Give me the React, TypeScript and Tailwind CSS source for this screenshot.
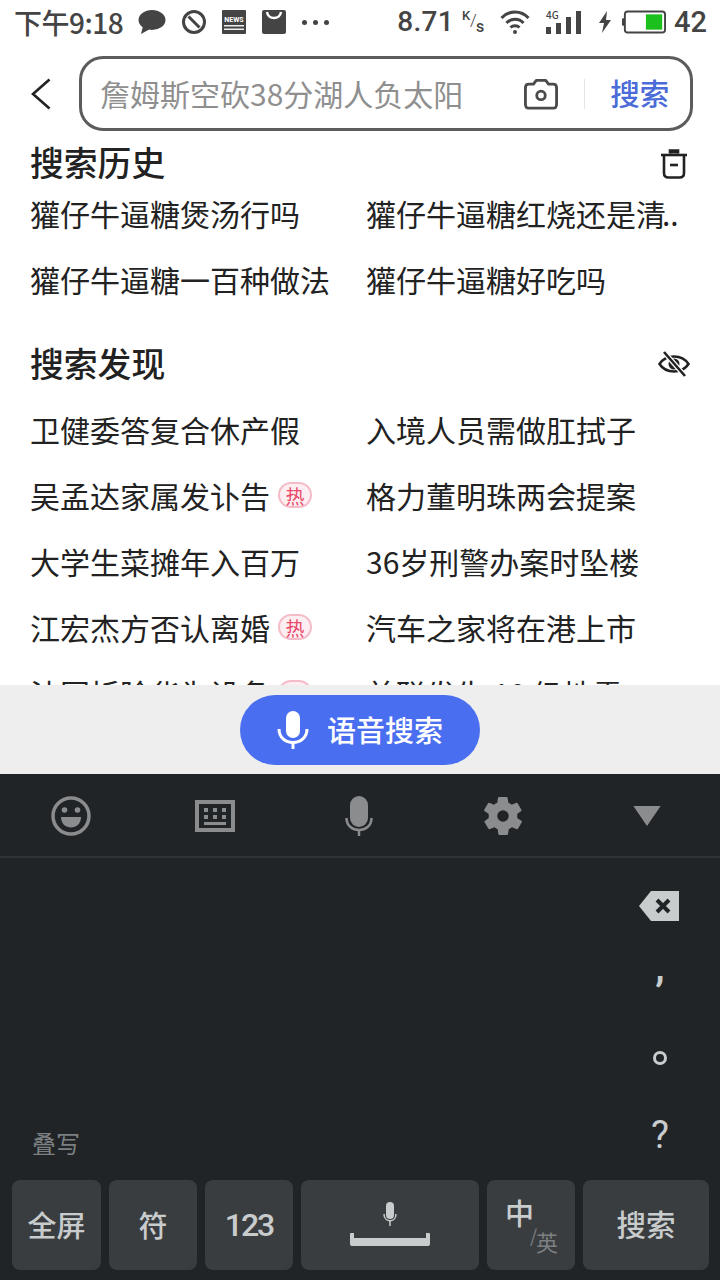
import type { ReactNode } from "react";

const font = "font-['Noto_Sans_CJK_SC','Roboto',sans-serif]";

const history = ["獾仔牛逼糖煲汤行吗", "獾仔牛逼糖红烧还是清", "獾仔牛逼糖一百种做法", "獾仔牛逼糖好吃吗"];

const discover = [
  { text: "卫健委答复合休产假" },
  { text: "入境人员需做肛拭子" },
  { text: "吴孟达家属发讣告", hot: true },
  { text: "格力董明珠两会提案" },
  { text: "大学生菜摊年入百万" },
  { text: "36岁刑警办案时坠楼" },
  { text: "江宏杰方否认离婚", hot: true },
  { text: "汽车之家将在港上市" },
  { text: "法国拆除华为设备", hot: true },
  { text: "美联发生 10 级地震" },
];

function HotBadge() {
  return (
    <span className="ml-[8px] flex h-[26px] w-[34px] items-center justify-center rounded-full border-2 border-[#f5bcc8] bg-[#fdeef1] text-[19px] leading-none text-[#e8486a]">
      热
    </span>
  );
}

function StatusBar() {
  return (
    <div className="flex h-[44px] items-center pl-[14px] pr-[13px] text-[#444444]">
      <span className="text-[28px] font-medium leading-none tracking-[-0.5px]">下午9:18</span>
      <svg width="28" height="26" viewBox="0 0 28 26" className="ml-[15px]">
        <ellipse cx="14" cy="11" rx="13.5" ry="10" fill="#444444" />
        <path d="M5 17 L3 25 L12 20 Z" fill="#444444" />
      </svg>
      <svg width="26" height="26" viewBox="0 0 26 26" className="ml-[15px]" fill="none" stroke="#444444" strokeWidth="3">
        <circle cx="13" cy="13" r="10.5" />
        <path d="M7.5 7.5 L18.5 18.5" />
      </svg>
      <svg width="24" height="24" viewBox="0 0 24 24" className="ml-[15px]">
        <rect width="24" height="24" rx="1" fill="#444444" />
        <rect x="2" y="15" width="20" height="1.5" fill="#eeeeee" />
        <rect x="2" y="18.5" width="20" height="1.5" fill="#eeeeee" />
        <text x="12" y="12" textAnchor="middle" fontSize="7" fontWeight="700" fill="#ffffff" fontFamily="Roboto">
          NEWS
        </text>
      </svg>
      <svg width="24" height="24" viewBox="0 0 24 24" className="ml-[16px]">
        <rect width="24" height="24" rx="2" fill="#444444" />
        <path d="M5 2 C6 10 18 10 19 2" fill="none" stroke="#ffffff" strokeWidth="2.4" />
      </svg>
      <div className="ml-[16px] flex gap-[6px]">
        <span className="h-[5px] w-[5px] rounded-full bg-[#444444]" />
        <span className="h-[5px] w-[5px] rounded-full bg-[#444444]" />
        <span className="h-[5px] w-[5px] rounded-full bg-[#444444]" />
      </div>
      <div className="ml-auto flex items-center">
        <span className="font-['Roboto',sans-serif] text-[28px] font-medium leading-none tracking-[0.3px]">8.71</span>
        <span className="relative ml-[8px] h-[26px] w-[23px] font-['Roboto',sans-serif] text-[13px] font-medium leading-none">
          <span className="absolute left-0 top-0">K</span>
          <span className="absolute left-[8px] top-[3px] text-[17px] font-light">/</span>
          <span className="absolute left-[14px] top-[10px] text-[16px]">s</span>
        </span>
        <svg width="30" height="26" viewBox="0 0 30 26" className="ml-[15px]" fill="none" stroke="#444444" strokeWidth="3">
          <path d="M1.5 9 C9 1 21 1 28.5 9" />
          <path d="M6.5 14 C11 9 19 9 23.5 14" />
          <path d="M10.5 18.5 C13 16 17 16 19.5 18.5" />
          <circle cx="15" cy="23" r="2" fill="#444444" stroke="none" />
        </svg>
        <span className="relative ml-[16px] flex h-[24px] w-[35px] items-end gap-[5px]">
          <span className="absolute left-0 top-0 text-[10px] font-medium leading-none">4G</span>
          <span className="h-[7px] w-[5px] bg-[#444444]" />
          <span className="h-[11px] w-[5px] bg-[#444444]" />
          <span className="h-[17px] w-[5px] bg-[#444444]" />
          <span className="h-[23px] w-[5px] bg-[#444444]" />
        </span>
        <svg width="14" height="22" viewBox="0 0 14 22" className="ml-[17px]" fill="#444444">
          <path d="M9 0 L1 12 H6 L4 22 L13 9 H8 Z" />
        </svg>
        <svg width="44" height="24" viewBox="0 0 46 24" className="ml-[10px]">
          <rect x="0" y="8" width="3" height="8" rx="1" fill="#444444" />
          <rect x="3" y="1" width="42" height="22" rx="3" fill="none" stroke="#444444" strokeWidth="2" />
          <rect x="25" y="4" width="17" height="16" fill="#1cc01c" />
        </svg>
        <span className="ml-[8px] font-['Roboto',sans-serif] text-[29px] font-medium leading-none">42</span>
      </div>
    </div>
  );
}

function SearchRow() {
  return (
    <div className="mt-[12px] flex h-[75px] items-center">
      <svg width="20" height="32" viewBox="0 0 20 32" className="ml-[31px]" fill="none" stroke="#222222" strokeWidth="2.6">
        <path d="M18.5 1.5 L2 16 L18.5 30.5" />
      </svg>
      <div className="ml-[28px] flex h-[75px] w-[614px] items-center rounded-[24px] border-[3px] border-[#5c5c5c] pl-[18px]">
        <span className="mb-[2px] whitespace-nowrap text-[30px] leading-none text-[#8f8f8f]">詹姆斯空砍38分湖人负太阳</span>
        <svg width="34" height="33" viewBox="0 0 36 34" className="ml-[61px] mt-[2px]" fill="none" stroke="#4a4a4a" strokeWidth="3">
          <path d="M5 6 H10 L13 2 H23 L26 6 H31 C33 6 34.5 7.5 34.5 10 V27 C34.5 30 33 31.5 31 31.5 H5 C3 31.5 1.5 30 1.500 27 V10 C1.500 7.5 3 6 5 6 Z" strokeLinejoin="round" />
          <circle cx="18" cy="18" r="4.5" />
        </svg>
        <span className="ml-[26px] h-[30px] w-px bg-[#e4e4e4]" />
        <span className="mb-[1px] ml-[25px] text-[29.5px] font-medium leading-none text-[#4a6bd8]">搜索</span>
      </div>
    </div>
  );
}

function Results() {
  return (
    <div className="h-[554px] overflow-hidden pl-[30px] pr-[32px] text-[#222222]">
      <div className="flex h-[62px] items-center justify-between pt-[4px]">
        <h2 className="mb-[4px] text-[33.8px] font-medium leading-none">搜索历史</h2>
        <svg width="28" height="30" viewBox="0 0 28 30" fill="none" stroke="#222222" strokeWidth="2.6">
          <path d="M1 6 H27" />
          <path d="M10 4.500 V1.500 H18 V4.500" fill="#222222" />
          <path d="M4 6 V24 C4 27 6 28.500 8.500 28.500 H19.500 C22 28.500 24 27 24 24 V6" />
          <path d="M10 16 H18" />
        </svg>
      </div>
      <div className="grid grid-cols-[336px_1fr]">
        {history.map((item) => (
          <div key={item} className="flex h-[66px] items-center pb-[26px] text-[30px] leading-none whitespace-nowrap">
            {item}
            {item.endsWith("清") && <span className="ml-[-4px]">..</span>}
          </div>
        ))}
      </div>
      <div className="mt-[6px] flex h-[66px] items-center justify-between">
        <h2 className="mb-[2px] text-[33.8px] font-medium leading-none">搜索发现</h2>
        <svg width="32" height="26" viewBox="0 0 32 26" className="mr-[-2px]" fill="none" stroke="#222222" strokeWidth="2.6">
          <path d="M1.500 13 C8 3 24 3 30.500 13 C24 23 8 23 1.500 13 Z" />
          <circle cx="16" cy="13" r="5.500" fill="#222222" stroke="none" />
          <path d="M6 1 L27 25" stroke="#ffffff" strokeWidth="5" />
          <path d="M6 1 L27 25" />
        </svg>
      </div>
      <div className="mt-[-1px] grid grid-cols-[336px_1fr]">
        {discover.map((item) => (
          <div key={item.text} className="flex h-[66px] items-center text-[30px] leading-none whitespace-nowrap">
            {item.text}
            {item.hot && <HotBadge />}
          </div>
        ))}
      </div>
    </div>
  );
}

function VoiceBar() {
  return (
    <div className="flex h-[89px] justify-center bg-[#eeeeee] pt-[10px]">
      <button type="button" className="flex h-[70px] w-[240px] items-center justify-center rounded-full bg-[#4a6ef0] text-white">
        <svg width="32" height="38" viewBox="0 0 32 38" fill="none">
          <rect x="9" y="0" width="14" height="27" rx="7" fill="#ffffff" />
          <path d="M2 18 C2 36 30 36 30 18" stroke="#ffffff" strokeWidth="3" />
          <path d="M16 31 V38" stroke="#ffffff" strokeWidth="3" />
        </svg>
        <span className="mb-[2px] ml-[18px] text-[29px] font-medium leading-none">语音搜索</span>
      </button>
    </div>
  );
}

function KeyboardToolbar() {
  return (
    <div className="flex h-[84px] items-center border-b-2 border-[#303336] pl-[51px] pt-[2px]">
      <svg width="40" height="40" viewBox="0 0 40 40" fill="none">
        <circle cx="20" cy="20" r="18" stroke="#8a8c8e" strokeWidth="3.5" />
        <circle cx="13.500" cy="14" r="2.800" fill="#8a8c8e" />
        <circle cx="26.500" cy="14" r="2.800" fill="#8a8c8e" />
        <path d="M10 21 H30 C30 35 10 35 10 21 Z" fill="#8a8c8e" />
      </svg>
      <svg width="40" height="32" viewBox="0 0 40 32" className="ml-[104px]">
        <path fillRule="evenodd" d="M0 0 H40 V32 H0 Z M4 4 V28 H36 V4 Z" fill="#8a8c8e" />
        <rect x="9" y="8" width="4" height="4" fill="#8a8c8e" />
        <rect x="18" y="8" width="4" height="4" fill="#8a8c8e" />
        <rect x="27" y="8" width="4" height="4" fill="#8a8c8e" />
        <rect x="9" y="15" width="4" height="4" fill="#8a8c8e" />
        <rect x="18" y="15" width="4" height="4" fill="#8a8c8e" />
        <rect x="27" y="15" width="4" height="4" fill="#8a8c8e" />
        <rect x="9" y="22" width="22" height="3" fill="#8a8c8e" />
      </svg>
      <svg width="28" height="40" viewBox="0 0 28 40" fill="none" className="ml-[110px]">
        <rect x="5" y="0" width="18" height="31" rx="9" fill="#8a8c8e" />
        <path d="M1.500 22 C1.500 38 26.500 38 26.500 22" stroke="#8a8c8e" strokeWidth="2.500" />
        <path d="M14 33 V40" stroke="#8a8c8e" strokeWidth="2.500" />
      </svg>
      <svg width="46" height="46" viewBox="0 0 24 24" className="ml-[107px]">
        <path
          fill="#8a8c8e"
          d="M19.400 13a7.500 7.500 0 0 0 0-2l2.100-1.600a.5.5 0 0 0 .1-.6l-2-3.500a.5.5 0 0 0-.6-.2l-2.500 1a7.300 7.300 0 0 0-1.700-1l-.4-2.600a.5.5 0 0 0-.5-.4h-4a.5.5 0 0 0-.5.4l-.4 2.600a7.300 7.300 0 0 0-1.700 1l-2.500-1a.5.5 0 0 0-.6.2l-2 3.500a.5.5 0 0 0 .1.6L4.600 11a7.500 7.500 0 0 0 0 2l-2.100 1.600a.5.5 0 0 0-.1.6l2 3.500c.1.200.4.300.6.200l2.500-1c.5.400 1.100.700 1.700 1l.4 2.600c0 .2.200.4.500.4h4c.2 0 .4-.2.500-.4l.4-2.600c.6-.300 1.200-.600 1.700-1l2.500 1c.2.100.5 0 .6-.2l2-3.500a.5.5 0 0 0-.1-.6zM12 15a3 3 0 1 1 0-6 3 3 0 0 1 0 6z"
        />
      </svg>
      <svg width="28" height="20" viewBox="0 0 30 22" className="ml-[107px]">
        <path d="M0 0 H30 L15 22 Z" fill="#8a8c8e" />
      </svg>
    </div>
  );
}

function Key({ width, children }: { width: string; children: ReactNode }) {
  return (
    <div className={`relative flex h-[90px] items-center justify-center rounded-[8px] bg-[#3a3d40] text-[#c9cccd] ${width}`}>
      {children}
    </div>
  );
}

function Keyboard() {
  return (
    <div className="flex h-[506px] flex-col bg-[#212427]">
      <KeyboardToolbar />
      <div className="flex h-[322px]">
        <div className="flex flex-1 flex-col justify-end pb-[25px] pl-[32px]">
          <span className="text-[24px] leading-none text-[#7d8082]">叠写</span>
        </div>
        <div className="flex w-[120px] flex-col items-center text-[#c9cccd]">
          <svg width="40" height="30" viewBox="0 0 40 30" className="ml-[-2px] mt-[33px]">
            <path d="M12 0 H40 V30 H12 L0 15 Z" fill="#c9cccd" />
            <path d="M18 9 L30 21 M30 9 L18 21" stroke="#212427" strokeWidth="4" />
          </svg>
          <span className="mt-[32px] flex h-[30px] items-center font-['Roboto',sans-serif] text-[38px] font-bold leading-none">,</span>
          <span className="mt-[68px] h-[14px] w-[14px] rounded-full border-[3px] border-[#c9cccd]" />
          <span className="mt-[51px] font-['Roboto',sans-serif] text-[38px] leading-none">?</span>
        </div>
      </div>
      <div className="flex gap-[8px] pl-[12px]">
        <Key width="w-[89px]">
          <span className="mb-[2px] text-[29px] font-medium leading-none">全屏</span>
        </Key>
        <Key width="w-[88px]">
          <span className="mb-[2px] text-[29px] font-medium leading-none">符</span>
        </Key>
        <Key width="w-[88px]">
          <span className="font-['Roboto',sans-serif] text-[32px] font-medium leading-none tracking-[-2px]">123</span>
        </Key>
        <Key width="w-[178px]">
          <div className="flex flex-col items-center pb-[2px]">
            <svg width="14" height="24" viewBox="0 0 14 24" fill="none">
              <rect x="3" y="0" width="8" height="17" rx="4" fill="#c9cccd" />
              <path d="M1 12 C1 21 13 21 13 12" stroke="#c9cccd" strokeWidth="1.500" />
              <path d="M7 19 V24" stroke="#c9cccd" strokeWidth="1.500" />
            </svg>
            <svg width="80" height="13" viewBox="0 0 80 13" className="mt-[7px]">
              <path d="M0 1 Q0 0 1 0 H4 V5 H76 V0 H79 Q80 0 80 1 V11 Q80 13 78 13 H2 Q0 13 0 11 Z" fill="#c9cccd" />
            </svg>
          </div>
        </Key>
        <Key width="w-[88px]">
          <span className="absolute left-[18px] top-[18px] text-[29px] font-medium leading-none">中</span>
          <span className="absolute left-[43px] top-[46px] text-[18px] leading-none text-[#7d8082]">/</span>
          <span className="absolute left-[49px] top-[50px] text-[22px] leading-none text-[#7d8082]">英</span>
        </Key>
        <Key width="w-[126px]">
          <span className="mb-[2px] text-[29.5px] font-medium leading-none">搜索</span>
        </Key>
      </div>
    </div>
  );
}

export default function App() {
  return (
    <div className={`flex h-[1280px] w-[720px] flex-col overflow-hidden bg-white ${font}`}>
      <StatusBar />
      <SearchRow />
      <Results />
      <VoiceBar />
      <Keyboard />
    </div>
  );
}
